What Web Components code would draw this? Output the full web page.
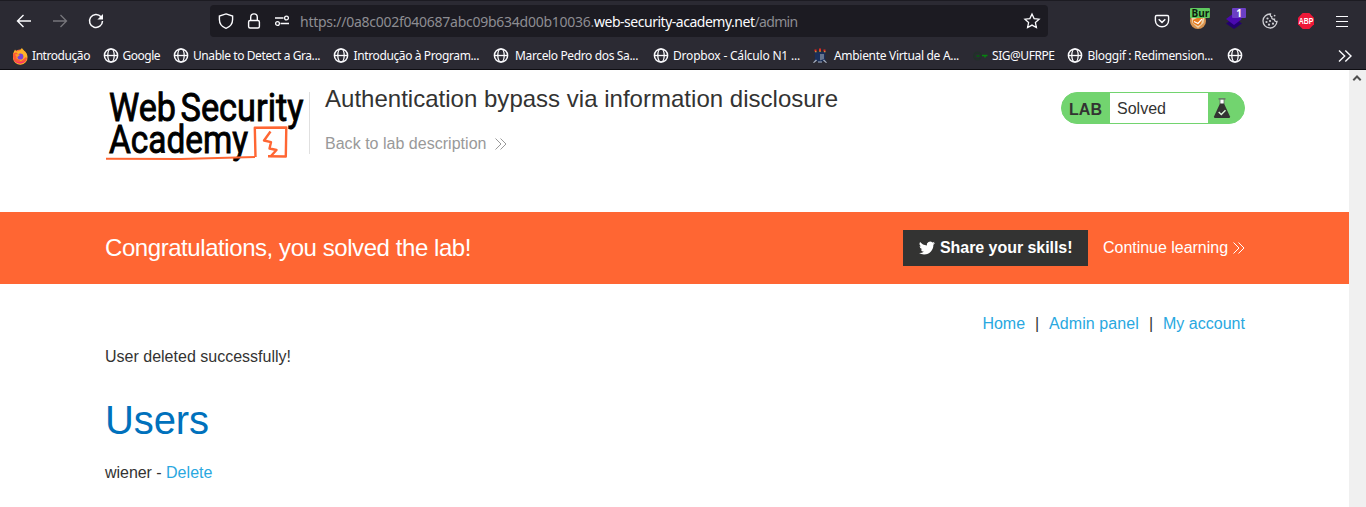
<!DOCTYPE html>
<html lang="en">
<head>
<meta charset="utf-8">
<title>Authentication bypass via information disclosure</title>
<style>
html,body{margin:0;height:507px;overflow:hidden;background:#fff}
body{font:16px/20px "Liberation Sans",Arial,sans-serif;color:#333332}
</style>
</head>
<body>
<app-window></app-window>
<script>
const define = (name, html, setup) => customElements.define(name, class extends HTMLElement {
  connectedCallback() {
    if (this.shadowRoot) return;
    const t = document.createElement('template');
    t.innerHTML = html;
    this.attachShadow({mode: 'open'}).append(t.content.cloneNode(true));
    if (setup) setup(this, this.shadowRoot);
  }
});

/* Tracks its text so that it fills the width given in the "w" attribute. */
define('fit-text', `<style>:host{display:inline-block;white-space:pre}span{display:inline-block;white-space:pre}</style><span><slot></slot></span>`, (el, root) => {
  const w = +el.getAttribute('w'), s = root.querySelector('span'), n = el.textContent.length;
  s.style.letterSpacing = ((w - s.getBoundingClientRect().width) / n) + 'px';
  el.style.width = w + 'px';
});

const icons = {
  back: ['0 0 16 16', '<path d="M15 8H1.5M7.5 2L1.5 8l6 6" stroke-width="1.4"/>'],
  forward: ['0 0 16 16', '<path d="M1 8h13.5M8.5 2l6 6-6 6" stroke-width="1.3"/>'],
  reload: ['0 0 16 16', '<path d="M13 3.8A6.5 6.5 0 1 0 14.5 8" stroke-width="1.5"/><path d="M15 1v5.6H9.4z" fill="currentColor" stroke="none"/>'],
  shield: ['0 0 16 16', '<path d="M8 .9l6.6 2.2v3.3c0 4-2.7 7.4-6.6 8.9C4.1 13.8 1.4 10.4 1.4 6.4V3.1z" stroke-width="1.4"/>'],
  lock: ['0 0 16 16', '<rect x="2.6" y="7.5" width="10.8" height="7.5" rx="1.5" stroke-width="1.4"/><path d="M4.7 7.5V4.2a3.3 3.3 0 0 1 6.600 0v3.3" stroke-width="1.4"/>'],
  perms: ['0 0 16 16', '<path d="M1 5h8.5M6.5 10.5H15" stroke-width="1.3"/><circle cx="12.5" cy="5" r="1.9" stroke-width="1.3"/><circle cx="3.5" cy="10.5" r="1.9" stroke-width="1.3"/>'],
  star: ['0 0 16 16', '<path d="M8 1l2.1 4.6 5 .6-3.7 3.4 1 5L8 12.1l-4.400 2.5 1-5L.9 6.2l5-.6z" stroke-width="1.3"/>'],
  pocket: ['0 0 16 16', '<path d="M2.7 2.5h10.6q1.3 0 1.3 1.3v3.7a6.6 6.3 0 0 1-13.200 0V3.8q0-1.3 1.3-1.3z" stroke-width="1.4"/><path d="M4.7 6.3L8 9.4l3.3-3.1" stroke-width="1.5"/>'],
  cookie: ['0 0 16 16', '<path d="M8.5 1A7 7 0 1 0 15 8.5c-1.8.3-2.7-.7-2.5-2.3-2 .3-3.2-.7-2.7-2.5C8.5 3.5 8 2.3 8.5 1z" stroke-width="1.3"/><g fill="currentColor" stroke="none"><circle cx="5.5" cy="5.5" r="1.1"/><circle cx="4.5" cy="9" r="1.1"/><circle cx="8" cy="8" r="1.1"/><circle cx="7" cy="11.7" r="1.1"/><circle cx="11" cy="10.7" r="1.1"/><circle cx="12.6" cy="2.6" r=".9"/></g>'],
  menu: ['0 0 16 16', '<path d="M2 3.5h12M2 8.5h12M2 13.5h12" stroke-width="1.2"/>'],
  globe: ['0 .5 16 16', '<circle cx="8" cy="8" r="6.6" stroke-width="1.5"/><ellipse cx="8" cy="8" rx="3.2" ry="6.6" stroke-width="1.3"/><path d="M1.5 8h13" stroke-width="1.3"/>'],
  more: ['0 0 16 16', '<path d="M2 2.5L7.7 8 2 13.5M8.3 2.5L14 8l-5.7 5.5" stroke-width="1.4"/>'],
  chevrons: ['0 0 14 14', '<path d="M1.5 1.500L7 7l-5.500 5.500M6.500 1.500L12 7l-5.500 5.500" stroke-width="1"/>'],
  up: ['0 0 16 16', '<path d="M4.3 10.2L8 6.5l3.7 3.7" stroke-width="2"/>'],
  bird: ['0 0 24 24', '<path fill="currentColor" stroke="none" d="M23.950 4.570a10 10 0 0 1-2.820.770 4.960 4.960 0 0 0 2.160-2.720c-.950.550-2 .950-3.130 1.180a4.920 4.920 0 0 0-8.380 4.480C7.690 8.100 4.070 6.130 1.640 3.160a4.920 4.920 0 0 0 1.520 6.570 4.900 4.900 0 0 1-2.230-.610v.060a4.920 4.920 0 0 0 3.950 4.830 5 5 0 0 1-2.210.080 4.940 4.940 0 0 0 4.600 3.420A9.870 9.870 0 0 1 0 19.540a14 14 0 0 0 7.550 2.210c9.050 0 14-7.500 14-13.980 0-.210 0-.420-.020-.630a9.940 9.940 0 0 0 2.420-2.570z"/>'],
  flask: ['0 0 16 20', '<path d="M6 1.500h4V7H6z" fill="#fff" stroke="none"/><path d="M4.500.900h7" stroke="#666" stroke-width="1.200"/><path d="M6 1v5M10 1v5" stroke="#666" stroke-width=".800"/><path d="M6 5.500h4l6 13q.300 1.500-1.200 1.500H1.200Q-.300 20 0 18.500z" fill="#333332" stroke="none"/><path d="M4.700 14l2.600 2.500 4.200-4.300" stroke="#d9f3d7" stroke-width="1.400"/>'],
  firefox: ['0 0 16 16', '<circle cx="8" cy="8.500" r="7" fill="#ff7139" stroke="none"/><path d="M1 8C1 4 3 2 3 1.500l1.500 2C7 3 8 3 9 1l1-1c.500 2 5.500 4 5.500 9A7.200 7.200 0 0 1 1 10z" fill="#ffb327" stroke="none"/><path d="M1 6c1-1 2-1.500 3.500-1.500L7 7l-3 3 5 3 5-4 1 1.500A7.300 7.300 0 0 1 8 15.500C3.500 15.500 .500 12 1 6z" fill="#ff5a36" stroke="none"/><path d="M1.500 11.500a9 9 0 0 0 12.500.500Q11.500 15.500 8 15.500q-4 0-6.500-4z" fill="#f72c75" stroke="none"/><circle cx="8.300" cy="8.500" r="3.100" fill="#7a42d8" stroke="none"/><path d="M3 6.500c2-1 3.500-.500 5 .500L6 8.500l-1 1z" fill="#ff9b26" stroke="none"/>'],
  crest: ['0 0 16 16', '<g stroke="none"><path d="M2.500 4h11l-.500 7 1.500 3.500-3-1.500L8 15l-3.500-2-3 1.500L3 11z" fill="#1b2f59"/><path d="M8 6h4v5l-4 1.500z" fill="#66758f"/><path d="M1 14.500l3-3 1 1-3 2.500zM15 14.500l-3-3-1 1 3 2.500zM6 13.500h4v1H6z" fill="#a9afbc"/><path d="M2.500 1.500h2v2h-2zM7 .500h2v2.500H7zM11.500 1.500h2v2h-2z" fill="#e22a23"/><path d="M3 3.300h1.500v1H3zM7.300 2.700h1.500v1H7.300zM12 3.300h1.500v1H12z" fill="#e8b33f"/></g>'],
  key: ['0 0 16 16', '<circle cx="5.500" cy="8" r="3.500" stroke="#22302a" stroke-width="2"/><path d="M4.500 8h3" stroke="#0a5414" stroke-width="2"/><path d="M10 7.500h5.500M13 7.500v2" stroke="#07840f" stroke-width="1.600"/>'],
  fox: ['0 0 16 16', '<g stroke="none"><circle cx="8" cy="8" r="8" fill="#d9934f"/><path d="M1.500 4h13l-1 6L8 15l-5.500-5z" fill="#f0d3ab"/><path d="M3 7l4-2 6-1-2 7-3 2-5-3z" fill="#e67a1e"/><path d="M4 8.500l4 2 4-4.500" stroke="#fff" fill="none" stroke-width="1.200"/></g>'],
  layers: ['0 0 16 16', '<g stroke="none"><path d="M8 5l8 5.500L8 16 0 10.500z" fill="#240070"/><path d="M8 0l8 6-8 6-8-6z" fill="#4b0ab0"/></g>'],
  abp: ['0 0 16 16', '<path d="M4.700 0h6.600L16 4.700v6.600L11.300 16H4.700L0 11.300V4.700z" fill="#ee1838" stroke="none"/><text x="8" y="11" text-anchor="middle" textLength="14.500" lengthAdjust="spacingAndGlyphs" fill="#fff" stroke="none" font-family="Liberation Sans" font-weight="700" font-size="8.500">ABP</text>']
};
define('ui-icon', `<style>:host{display:block;flex:none;width:var(--s,16px);height:var(--h,var(--s,16px))}svg{display:block;width:100%;height:100%;fill:none;stroke:currentColor;overflow:visible}</style>`, (el, root) => {
  const [box, body] = icons[el.getAttribute('name')];
  root.innerHTML += `<svg viewBox="${box}">${body}</svg>`;
});

define('address-bar', `<style>
:host{display:flex;align-items:center;box-sizing:border-box;width:838px;height:32px;padding:0 8px;border-radius:4px;background:#1c1b22;color:#fbfbfe}
.g{display:flex;gap:12px;margin-right:10px}
.url{display:flex;flex:1;font:14px/20px "Noto Sans",sans-serif;color:#8d8d92;padding-top:1px}
b{font-weight:400;color:#fbfbfe}
</style><div class="g"><ui-icon name="shield"></ui-icon><ui-icon name="lock"></ui-icon><ui-icon name="perms"></ui-icon></div>
<div class="url"><fit-text w="294">https://0a8c002f040687abc09b634d00b10036.</fit-text><b><fit-text w="160.500">web-security-academy.net</fit-text></b><fit-text w="43">/admin</fit-text></div><ui-icon name="star"></ui-icon>`);

define('extension-button', `<style>:host{display:block;position:relative;width:16px;height:16px}
span{position:absolute;box-sizing:border-box;top:-5px;left:var(--bl);width:var(--bw);height:10px;padding-left:var(--bp,0);overflow:hidden;border-radius:1px;font:700 10px/11px "Open Sans",sans-serif;text-align:var(--ba,left);background:var(--bg);color:var(--fg)}</style>`, (el, root) => {
  root.innerHTML += `<ui-icon name="${el.getAttribute('icon')}"></ui-icon>` + (el.hasAttribute('badge') ? `<span>${el.getAttribute('badge')}</span>` : '');
});

define('book-mark', `<style>:host{display:flex;align-items:center;flex:none;box-sizing:border-box;gap:var(--g,5px);height:20px}
fit-text{font:12px/20px "Noto Sans",sans-serif;color:#fbfbfe}</style>`, (el, root) => {
  const label = el.getAttribute('label');
  root.innerHTML += `<ui-icon name="${el.getAttribute('icon') || 'globe'}"></ui-icon>` + (label ? `<fit-text w="${el.getAttribute('w')}">${label}</fit-text>` : '');
});

define('browser-chrome', `<style>
:host{display:block;box-sizing:border-box;height:70px;background:#2b2a33;border-top:1px solid #1c1b22;border-bottom:1px solid #0e0d12;color:#fbfbfe}
.nav{display:flex;align-items:center;height:32px;padding:4px 16px 0}
.l{display:flex;gap:20px;width:194px}
.r{display:flex;gap:20px;margin-left:auto}
.marks{display:flex;align-items:center;height:20px;padding:9px 13px 0 12px}
.end{margin-left:auto}
</style>
<div class="nav"><div class="l"><ui-icon name="back"></ui-icon><ui-icon name="forward" style="color:#77767c"></ui-icon><ui-icon name="reload"></ui-icon></div>
<address-bar></address-bar>
<div class="r"><extension-button icon="pocket"></extension-button>
<extension-button icon="fox" badge="Burp" style="--bl:0px;--bw:20px;--bp:1.500px;--bg:#5fc95f;--fg:#0c1c0c"></extension-button>
<extension-button icon="layers" badge="1" style="--bl:6px;--bw:14px;--bg:#6b3fc4;--fg:#fff;--ba:center"></extension-button>
<extension-button icon="cookie" style="color:#cfcfd4"></extension-button><extension-button icon="abp"></extension-button><extension-button icon="menu"></extension-button></div></div>
<div class="marks">
<book-mark icon="firefox" label="Introdução" w="58" style="width:90.500px;--g:4px"></book-mark>
<book-mark label="Google" w="37.500" style="width:70px;--g:4px"></book-mark>
<book-mark label="Unable to Detect a Gra..." w="127" style="width:160px;--g:4.500px"></book-mark>
<book-mark label="Introdução à Program..." w="125.500" style="width:160px"></book-mark>
<book-mark label="Marcelo Pedro dos Sa..." w="123" style="width:160px;--g:6.500px"></book-mark>
<book-mark label="Dropbox - Cálculo N1 ..." w="127" style="width:159.500px;--g:4.500px"></book-mark>
<book-mark icon="crest" label="Ambiente Virtual de A..." w="125" style="width:160px;--g:6px"></book-mark>
<book-mark icon="key" label="SIG@UFRPE" w="62.500" style="width:94.500px;--g:4px"></book-mark>
<book-mark label="Bloggif : Redimension..." w="125.500" style="width:160px"></book-mark>
<book-mark></book-mark><ui-icon class="end" name="more"></ui-icon></div>`);

define('academy-logo', `<style>:host{display:block;width:204px;height:72px;flex:none}svg{display:block;overflow:visible}text{font-family:Roboto,sans-serif;font-weight:400;font-size:38px;fill:#000;stroke:#000;stroke-width:.9px}</style>
<svg width="204" height="72" viewBox="105 92 204 72"><text x="109" y="120.500" textLength="67" lengthAdjust="spacingAndGlyphs">Web</text><text x="180.500" y="120.500" textLength="123" lengthAdjust="spacingAndGlyphs">Security</text><text x="109" y="152.800" textLength="139" lengthAdjust="spacingAndGlyphs">Academy</text>
<g fill="none" stroke="#ff6633" stroke-width="2.400" stroke-linejoin="round"><path d="M255.500 157l-.700-29.200 31.500-.300-.500 29-17.800-.300"/><path d="M106 158.700l75 .300 74-2" stroke-width="2"/><path d="M270.500 131.500l-6.500 9 7 1.700-1.500 6.300 7 1.500-6 6.500"/></g></svg>`);

define('lab-status', `<style>:host{display:flex;box-sizing:border-box;width:184px;height:32px;border:1px solid #72d46f;border-radius:16px;background:#72d46f;overflow:hidden}
b{width:48px;box-sizing:border-box;padding-left:7px;line-height:33px}
p{margin:0;width:98px;box-sizing:border-box;padding-left:7px;background:#fff;line-height:31px}
ui-icon{margin:5px 0 0 6px}</style><b><fit-text w="33">LAB</fit-text></b><p><slot></slot></p><ui-icon name="flask" style="--s:16px;--h:20px"></ui-icon>`);

define('lab-header', `<style>:host{display:flex;box-sizing:border-box;height:142px;padding:22px 104px 0 105px}
.t{height:62px;border-left:1px solid #e0e0e0;padding-left:15px;flex:1}
h2{margin:-7px 0 0;font:400 24px/28px "Liberation Sans",Arial,sans-serif}
a{display:flex;align-items:center;gap:7px;margin-top:21px;color:#999;line-height:20px}ui-icon{margin-top:-1px}</style>
<academy-logo></academy-logo><div class="t"><h2><fit-text w="513">Authentication bypass via information disclosure</fit-text></h2><a><fit-text w="161.500">Back to lab description</fit-text><ui-icon name="chevrons" style="--s:14px"></ui-icon></a></div><lab-status>Solved</lab-status>`);

define('solved-banner', `<style>:host{display:flex;align-items:center;box-sizing:border-box;height:72px;padding:0 104px 0 105px;background:#f63;color:#fff}
h4{margin:0;flex:1;font:400 24px/28px "Liberation Sans",Arial,sans-serif}
button{display:flex;align-items:center;gap:5px;box-sizing:border-box;width:185px;height:36px;padding:0 0 0 16px;border:0;background:#333332;color:#fff;font:700 16px/20px "Liberation Sans",Arial,sans-serif}
a{display:flex;align-items:center;gap:4px;margin-left:15px}</style>
<h4><fit-text w="366">Congratulations, you solved the lab!</fit-text></h4><button><ui-icon name="bird"></ui-icon><fit-text w="132.500">Share your skills!</fit-text></button><a><fit-text w="125">Continue learning</fit-text><ui-icon name="chevrons" style="--s:14px;margin-right:-1px"></ui-icon></a>`);

define('admin-panel', `<style>:host{display:block;padding:30px 104px 0 105px}
nav{display:flex;justify-content:flex-end;gap:10px}a{color:#29a8df}i{font-style:normal;width:4px}
p{margin:13px 0 0}h1{margin:29px 0 0;font:400 40px/48px "Liberation Sans",Arial,sans-serif;color:#0071bc}.u{margin-top:19px}</style>
<nav><a><fit-text w="42.500">Home</fit-text></a><i>|</i><a><fit-text w="90">Admin panel</fit-text></a><i>|</i><a><fit-text w="82">My account</fit-text></a></nav>
<p><fit-text w="186">User deleted successfully!</fit-text></p><h1><fit-text w="104">Users</fit-text></h1>
<p class="u"><fit-text w="61">wiener - </fit-text><a><fit-text w="46.500">Delete</fit-text></a></p>`);

define('app-window', `<style>:host{display:block;height:507px;overflow:hidden}
.view{display:flex;height:437px}main{flex:1}aside{width:17px;background:#f0f0f0;color:#505050}</style>
<browser-chrome></browser-chrome><div class="view"><main><lab-header></lab-header><solved-banner></solved-banner><admin-panel></admin-panel></main><aside><ui-icon name="up"></ui-icon></aside></div>`);
</script>
</body>
</html>
